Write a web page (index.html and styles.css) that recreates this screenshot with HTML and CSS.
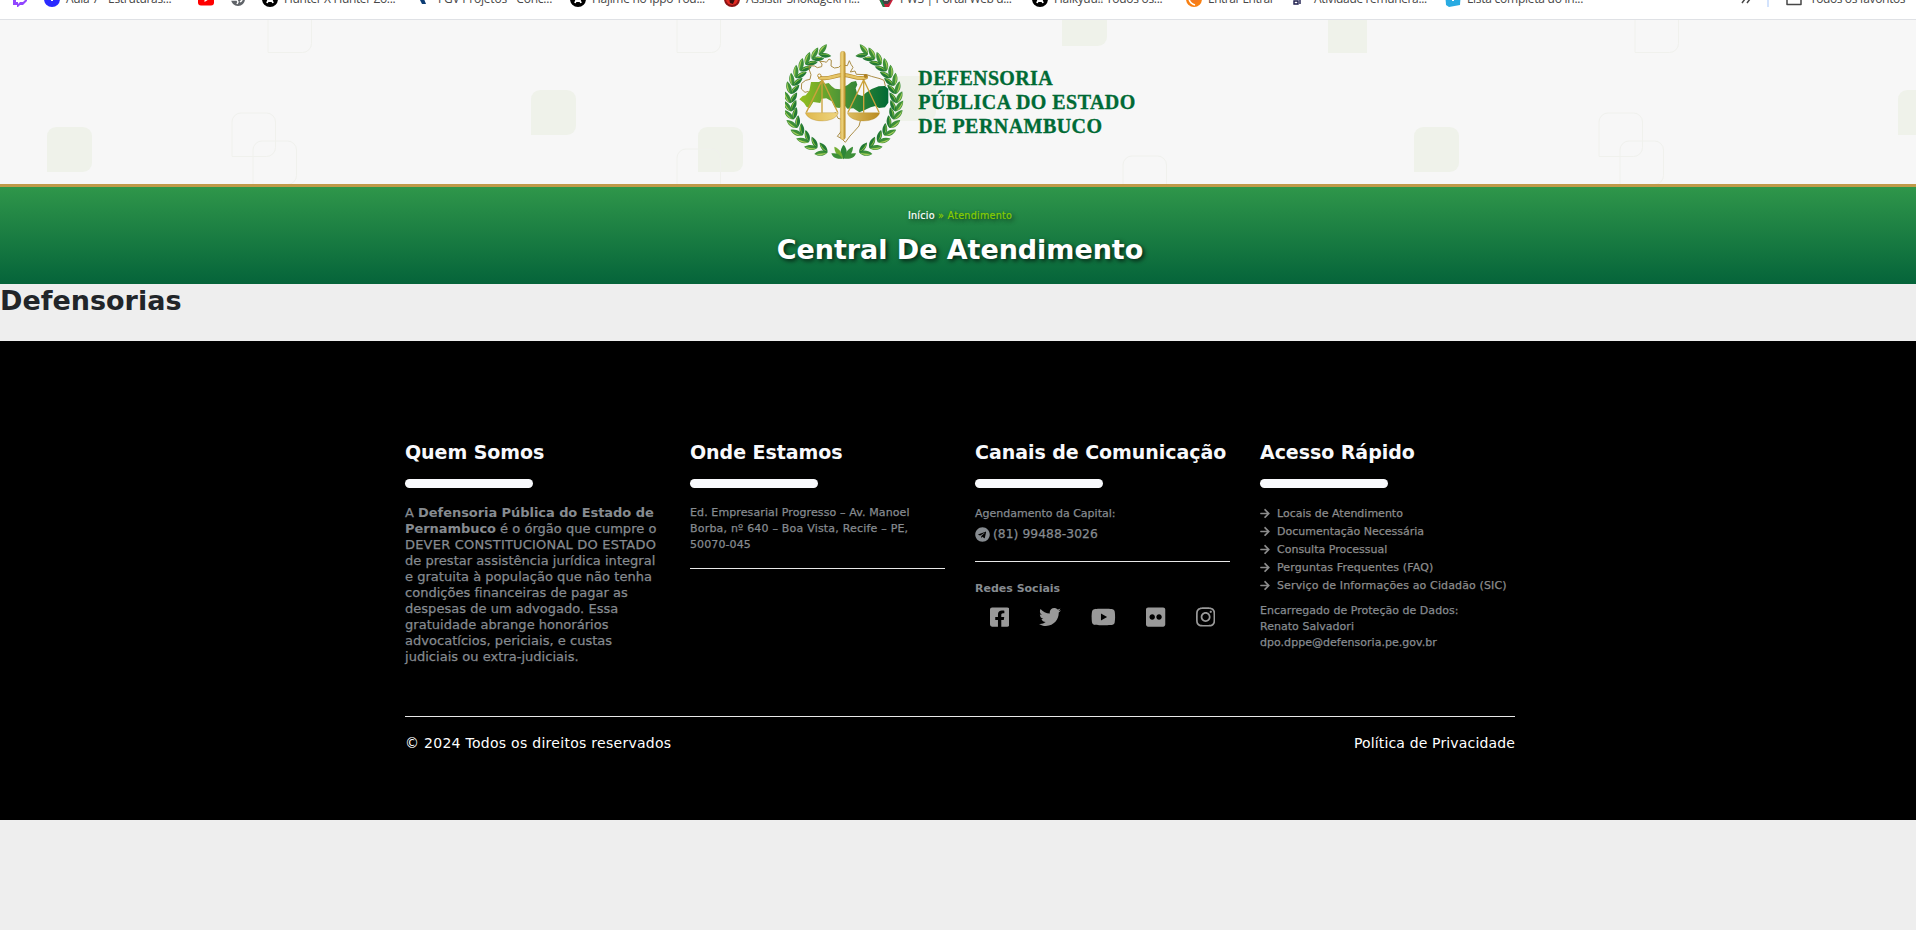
FILE: index.html
```
<!DOCTYPE html>
<html lang="pt-BR">
<head>
<meta charset="utf-8">
<title>Central De Atendimento</title>
<link rel="stylesheet" href="styles.css">
</head>
<body>
<div class="page">
  <nav class="bookmarks">
    <ul class="bookmark-list">
      <li class="bm bm-icon"><svg viewBox="0 0 16 16"><path fill="#9146ff" d="M2 0h13v10l-4 4H8l-3 3v-3H1V3z"/><path fill="#fff" d="M4 2h9v7l-2 2H8l-2 2v-2H4z"/></svg></li>
      <li class="bm bm-wide"><svg viewBox="0 0 16 16"><circle cx="8" cy="8" r="8" fill="#2a2aff"/><path fill="#fff" d="M7 4h2v6H7z"/></svg><span>Aula 7 - Estruturas...</span></li>
      <li class="bm bm-tube"><svg viewBox="0 0 16 16"><rect y="2.500" width="16" height="12" rx="3" fill="#f00"/><path fill="#fff" d="M6.500 6v5l4-2.500z"/></svg></li>
      <li class="bm bm-tube"><svg viewBox="0 0 16 16"><circle cx="8" cy="8" r="7" fill="#5f6368"/><path d="M1 9h6l1 2-1 2M10 4c3 2 3 5 0 7" stroke="#fff" stroke-width="1.500" fill="none"/></svg></li>
      <li class="bm bm-wide"><svg viewBox="0 0 16 16"><circle cx="8" cy="8" r="8" fill="#000"/><path d="M5 12l3-7 3 7M6 10h4" stroke="#fff" stroke-width="1.800" fill="none"/></svg><span class="t2">Hunter X Hunter Zo...</span></li>
      <li class="bm bm-wide"><svg viewBox="0 0 16 16"><path fill="#0b3c74" d="M3 7l5 1 2 5H6z"/></svg><span class="t3">FGV Projetos - Conc...</span></li>
      <li class="bm bm-wide"><svg viewBox="0 0 16 16"><circle cx="8" cy="8" r="8" fill="#000"/><path d="M5 12l3-7 3 7M6 10h4" stroke="#fff" stroke-width="1.800" fill="none"/></svg><span>Hajime no Ippo Tod...</span></li>
      <li class="bm bm-wide"><svg viewBox="0 0 16 16"><circle cx="8" cy="8" r="8" fill="#8c1414"/><circle cx="8" cy="8" r="6" fill="#e22a22"/><path d="M5 7l3 2 3-1-2 5-3-1z" fill="#3a0c0c"/></svg><span>Assistir Shokugeki n...</span></li>
      <li class="bm bm-wide"><svg viewBox="0 0 16 16"><path fill="#c8203a" d="M0 6l4-5h8l4 6-5 9H5z"/><path fill="#19854a" d="M0 6l5 10h2L4 6z"/><path fill="#444" d="M4 4h8l1 5-3 4H6L4 9z"/><path d="M6 8l1 2 1-2 1 2 1-2" stroke="#ddd" fill="none"/></svg><span class="t2">PWS | Portal Web d...</span></li>
      <li class="bm bm-wide"><svg viewBox="0 0 16 16"><circle cx="8" cy="8" r="8" fill="#000"/><path d="M5 12l3-7 3 7M6 10h4" stroke="#fff" stroke-width="1.800" fill="none"/></svg><span>Haikyuu!! Todos os...</span></li>
      <li class="bm bm-moodle"><svg viewBox="0 0 16 16"><circle cx="8" cy="8" r="8" fill="#f98012"/><circle cx="9" cy="7" r="5" fill="#f47a20"/><path d="M3 7c0 4 3 6 6 7" stroke="#fff" fill="none" stroke-width="1.500"/></svg><span class="t4">Entrar Entrar</span></li>
      <li class="bm bm-task"><svg viewBox="0 0 16 16"><path d="M2 5h4v3H2zM2 10h4v3H2zM8 5h5v3H8zM8 8v5" stroke="#1b1b4b" stroke-width="1.400" fill="none"/></svg><span class="t2">Atividade remunera...</span></li>
      <li class="bm bm-last"><svg viewBox="0 0 16 16"><path fill="#29abe2" d="M0 0h16l-1 14-11 2-3-2z"/><path fill="#fff" d="M7 5h2v5H7z"/></svg><span class="t5">Lista completa do in...</span></li>
      <li class="bm bm-more"><svg viewBox="0 0 12 16"><path d="M1 4l3 4-3 4M6 4l3 4-3 4" stroke="#474747" stroke-width="1.500" fill="none"/></svg></li>
      <li class="bm-divider"></li>
      <li class="bm"><svg viewBox="0 0 16 16"><path d="M1 3h5l2 2h7v8.500H1z" stroke="#474747" stroke-width="1.500" stroke-linejoin="round" fill="none"/></svg><span class="t6">Todos os favoritos</span></li>
    </ul>
  </nav>

  <header class="site-header">
    <svg class="header-pattern" width="1920" height="164" viewBox="0 20 1920 164">
      <defs>
        <path id="tile" d="M0 45V9a9 9 0 0 1 9-9H36a9 9 0 0 1 9 9V36a9 9 0 0 1-9 9z"/>
        <path id="line" d="M0 43.500V9a9 9 0 0 1 9-9H34.500a9 9 0 0 1 9 9V34.500a9 9 0 0 1-9 9z"/>
      </defs>
      <g fill="#eff2ea">
        <use href="#tile" x="47" y="127"/><use href="#tile" x="531" y="90"/><use href="#tile" x="698" y="127"/>
        <use href="#tile" x="891" y="76"/><use href="#tile" x="1062" y="1"/><path d="M1328 20h39v33h-39z"/>
        <use href="#tile" x="1414" y="127"/><use href="#tile" x="1898" y="90"/>
      </g>
      <g fill="none" stroke="#f0f1ed">
        <use href="#line" x="268" y="9"/><use href="#line" x="232" y="113"/><use href="#line" x="253" y="141"/>
        <use href="#line" x="677" y="9"/><use href="#line" x="677" y="149"/><use href="#line" x="1123" y="156"/>
        <use href="#line" x="1635" y="9"/><use href="#line" x="1599" y="113"/><use href="#line" x="1620" y="141"/>
      </g>
    </svg>
    <a class="logo" href="#">
      <svg width="350" height="120" viewBox="45 30 1050 360" role="img">
        <defs>
          <linearGradient id="gold" x1="0" x2="1"><stop offset="0" stop-color="#dfb84d"/><stop offset=".4" stop-color="#edd27c"/><stop offset="1" stop-color="#b88a20"/></linearGradient>
          <linearGradient id="land" x1="0" x2="1"><stop offset="0" stop-color="#95bf1f"/><stop offset=".45" stop-color="#4f9636"/><stop offset="1" stop-color="#006a35"/></linearGradient>
          <g id="leaf">
            <path fill="#3c8f38" d="M233 56C222 60 206 54 198 37C214 34 228 41 233 56z"/>
            <path fill="#a5cc5a" d="M231 53C222 48 212 42 201 38C212 37 224 42 231 53z"/>
            <path fill="#237a35" d="M233 56C220 53 206 60 200 75C216 77 229 69 233 56z"/>
            <path fill="#8fc040" d="M231 59C222 59 211 65 203 73C206 64 218 56 231 59z"/>
          </g>
          <g id="branch">
            <use href="#leaf" transform="rotate(23 220 215)"/><use href="#leaf" transform="rotate(32 220 215)"/><use href="#leaf" transform="rotate(41 220 215)"/>
            <use href="#leaf" transform="rotate(50 220 215)"/><use href="#leaf" transform="rotate(59 220 215)"/><use href="#leaf" transform="rotate(68 220 215)"/>
            <use href="#leaf" transform="rotate(77 220 215)"/><use href="#leaf" transform="rotate(87 220 215)"/><use href="#leaf" transform="rotate(96 220 215)"/>
            <use href="#leaf" transform="rotate(105 220 215)"/><use href="#leaf" transform="rotate(115 220 215)"/><use href="#leaf" transform="rotate(125 220 215)"/>
            <use href="#leaf" transform="rotate(135 220 215)"/><use href="#leaf" transform="rotate(146 220 215)"/><use href="#leaf" transform="rotate(158 220 215)"/>
          </g>
        </defs>
        <use href="#branch"/>
        <use href="#branch" transform="matrix(-1 0 0 1 440 0)"/>
        <path fill="#2c8537" d="M221 388C208 376 209 358 221 344C233 358 234 376 221 388z"/>
        <path fill="#73ad32" d="M219 386C203 382 193 366 193 350C209 356 218 370 219 386z"/>
        <path fill="#3c8f38" d="M223 386C239 382 249 366 249 350C233 356 224 370 223 386zM217 386C202 388 188 384 184 370C201 368 212 374 217 386zM225 386C240 388 254 384 258 370C241 368 230 374 225 386z"/>
        <path fill="none" stroke="#a4853a" stroke-width="2.800" stroke-linejoin="round" d="M116 184L105 187L94 177L95 160L107 151L120 148L123 134L118 120L117 107L134 108L142 113L155 110L156 102L149 94L163 95L169 97L177 87L184 91L183 108L193 114L206 112L214 105L232 107L238 92L243 103L249 112L241 126L255 123L259 133L290 134L304 139L330 146L342 151L346 168L330 180M292 267L272 269L267 288L252 305L240 318L226 337L214 325L202 319L216 301L215 268L204 265L195 246"/>
        <path fill="url(#land)" d="M123 156L147 156L155 151L166 161L176 159L185 169L195 176L210 178L222 170L233 165L244 156L258 153L262 164L257 175L262 193L277 198L288 188L305 177L326 169L345 168L355 177L355 218L345 232L327 234L316 228L302 232L286 239L268 247L250 235L232 236L223 225L208 234L194 232L185 214L169 205L155 206L151 219L130 216L119 234L110 231L102 219L88 208L98 198L107 196L118 182z"/>
        <path fill="none" stroke="#cba23b" stroke-width="4" d="M157 149L109 247M157 149L203 247M156 149V248M281 149L234 247M281 149L327 247M281 149V248"/>
        <path fill="url(#gold)" stroke="#ae8526" d="M106 248H205C198 280 116 282 106 248zM232 248H329C321 280 241 282 232 248z"/>
        <path fill="none" stroke="#b58b2d" stroke-width="12" stroke-linecap="round" d="M150 143C177 151 190 135 219 135C249 135 261 151 288 142"/>
        <path fill="none" stroke="#e6c567" stroke-width="8" stroke-linecap="round" d="M150 143C177 151 190 135 219 135C249 135 261 151 288 142"/>
        <circle cx="148" cy="137" r="5" fill="#fff" stroke="#b58b2d" stroke-width="3"/>
        <circle cx="287" cy="138" r="6" fill="#b08020"/>
        <rect x="211" y="64" width="15" height="265" rx="7" fill="url(#gold)" stroke="#b08a2d"/>
        <g class="logo-text">
          <text x="445" y="165" textLength="403">DEFENSORIA</text>
          <text x="445" y="237" textLength="651">PÚBLICA DO ESTADO</text>
          <text x="445" y="309" textLength="551">DE PERNAMBUCO</text>
        </g>
      </svg>
    </a>
  </header>

  <section class="banner">
    <p class="crumbs"><a href="#">Início</a> » Atendimento</p>
    <h1>Central De Atendimento</h1>
  </section>

  <main class="content"><h2>Defensorias</h2></main>

  <footer class="site-footer">
    <div class="footer-inner">
      <div class="columns">
        <section class="col">
          <h3>Quem Somos</h3>
          <p class="about">A <b>Defensoria Pública do Estado de<br>Pernambuco</b> é o órgão que cumpre o<br><span class="duty">DEVER CONSTITUCIONAL DO ESTADO</span><br>de prestar assistência jurídica integral<br>e gratuita à população que não tenha<br>condições financeiras de pagar as<br>despesas de um advogado. Essa<br>gratuidade abrange honorários<br>advocatícios, periciais, e custas<br>judiciais ou extra-judiciais.</p>
        </section>
        <section class="col">
          <h3>Onde Estamos</h3>
          <p class="address">Ed. Empresarial Progresso – Av. Manoel<br><span class="street">Borba, nº 640 – Boa Vista, Recife – PE,</span><br>50070-045</p>
          <div class="rule"></div>
        </section>
        <section class="col">
          <h3>Canais de Comunicação</h3>
          <p class="schedule">Agendamento da Capital:</p>
          <p class="phone"><svg viewBox="0 0 496 512"><path d="M248 8C111 8 0 119 0 256s111 248 248 248 248-111 248-248S385 8 248 8zm121.800 169.900l-40.700 191.800c-3 13.600-11.100 16.900-22.400 10.500l-62-45.700-29.900 28.800c-3.300 3.300-6.100 6.100-12.500 6.100l4.400-63.100 114.900-103.800c5-4.400-1.100-6.900-7.700-2.500l-142 89.400-61.200-19.100c-13.300-4.200-13.600-13.300 2.800-19.700l239.100-92.200c11.100-4 20.800 2.700 17.200 19.500z"/></svg>(81) 99488-3026</p>
          <div class="rule"></div>
          <p class="social-title">Redes Sociais</p>
          <div class="social">
            <svg class="w448" viewBox="0 0 448 512"><path d="M400 32H48A48 48 0 0 0 0 80v352a48 48 0 0 0 48 48h137.250V327.690h-63V256h63v-54.640c0-62.150 37-96.480 93.670-96.480 27.140 0 55.520 4.840 55.520 4.840v61h-31.270c-30.810 0-40.420 19.120-40.420 38.730V256h68.780l-11 71.690h-57.780V480H400a48 48 0 0 0 48-48V80a48 48 0 0 0-48-48z"/></svg>
            <svg class="w512" viewBox="0 0 512 512"><path d="M459.370 151.716c.325 4.548.325 9.097.325 13.645 0 138.720-105.583 298.558-298.558 298.558-59.452 0-114.680-17.219-161.137-47.106 8.447.974 16.568 1.299 25.340 1.299 49.055 0 94.213-16.568 130.274-44.832-46.132-.975-84.792-31.188-98.112-72.772 6.498.974 12.995 1.624 19.818 1.624 9.421 0 18.843-1.300 27.614-3.573-48.081-9.747-84.143-51.980-84.143-102.985v-1.299c13.969 7.797 30.214 12.670 47.431 13.319-28.264-18.843-46.781-51.005-46.781-87.391 0-19.492 5.197-37.360 14.294-52.954 51.655 63.675 129.300 105.258 216.365 109.807-1.624-7.797-2.599-15.918-2.599-24.040 0-57.828 46.782-104.934 104.934-104.934 30.213 0 57.502 12.670 76.670 33.137 23.715-4.548 46.456-13.320 66.599-25.340-7.798 24.366-24.366 44.833-46.132 57.827 21.117-2.273 41.584-8.122 60.426-16.243-14.292 20.791-32.161 39.308-52.628 54.253z"/></svg>
            <svg class="w576" viewBox="0 0 576 512"><path d="M549.655 124.083c-6.281-23.650-24.787-42.276-48.284-48.597C458.781 64 288 64 288 64S117.220 64 74.629 75.486c-23.497 6.322-42.003 24.947-48.284 48.597-11.412 42.867-11.412 132.305-11.412 132.305s0 89.438 11.412 132.305c6.281 23.650 24.787 41.500 48.284 47.821C117.220 448 288 448 288 448s170.780 0 213.371-11.486c23.497-6.321 42.003-24.171 48.284-47.821 11.412-42.867 11.412-132.305 11.412-132.305s0-89.438-11.412-132.305zm-317.510 213.508V175.185l142.739 81.205-142.739 81.201z"/></svg>
            <svg class="w448" viewBox="0 0 448 512"><path d="M400 32H48C21.500 32 0 53.500 0 80v352c0 26.500 21.500 48 48 48h352c26.500 0 48-21.500 48-48V80c0-26.500-21.500-48-48-48zM144.500 319c-35.100 0-63.500-28.400-63.500-63.500s28.400-63.500 63.500-63.500 63.500 28.400 63.500 63.500-28.400 63.500-63.500 63.500zm159 0c-35.100 0-63.500-28.400-63.500-63.500s28.400-63.500 63.500-63.500 63.500 28.400 63.500 63.500-28.400 63.500-63.500 63.500z"/></svg>
            <svg class="w448" viewBox="0 0 448 512"><path d="M224.100 141c-63.600 0-114.900 51.300-114.900 114.900s51.300 114.900 114.900 114.900S339 319.500 339 255.900 287.700 141 224.100 141zm0 189.600c-41.100 0-74.700-33.500-74.700-74.700s33.500-74.700 74.700-74.700 74.700 33.500 74.700 74.700-33.600 74.700-74.700 74.700zm146.400-194.300c0 14.900-12 26.800-26.800 26.800-14.900 0-26.800-12-26.800-26.800s12-26.800 26.800-26.800 26.800 12 26.800 26.800zm76.100 27.200c-1.700-35.900-9.900-67.700-36.200-93.900-26.200-26.200-58-34.400-93.900-36.200-37-2.100-147.900-2.100-184.900 0-35.800 1.700-67.600 9.900-93.900 36.100s-34.400 58-36.200 93.900c-2.100 37-2.100 147.900 0 184.900 1.700 35.900 9.900 67.700 36.200 93.900s58 34.400 93.900 36.200c37 2.100 147.900 2.100 184.900 0 35.900-1.700 67.700-9.900 93.900-36.200 26.200-26.200 34.400-58 36.200-93.900 2.100-37 2.100-147.800 0-184.800zM398.800 388c-7.800 19.600-22.900 34.700-42.600 42.600-29.500 11.700-99.500 9-132.100 9s-102.700 2.600-132.100-9c-19.600-7.800-34.700-22.900-42.600-42.600-11.700-29.500-9-99.500-9-132.100s-2.600-102.700 9-132.100c7.800-19.600 22.900-34.700 42.600-42.600 29.500-11.700 99.500-9 132.100-9s102.700-2.600 132.100 9c19.600 7.800 34.700 22.900 42.600 42.600 11.700 29.500 9 99.500 9 132.100s2.700 102.700-9 132.100z"/></svg>
          </div>
        </section>
        <section class="col">
          <svg class="sprite"><symbol id="arrow" viewBox="0 0 448 512"><path d="M190.500 66.900l22.200-22.200c9.400-9.400 24.600-9.400 33.900 0L441 239c9.400 9.400 9.400 24.600 0 33.900L246.600 467.300c-9.400 9.400-24.600 9.400-33.900 0l-22.200-22.200c-9.500-9.500-9.300-25 .4-34.300L311.400 296H24c-13.300 0-24-10.700-24-24v-32c0-13.300 10.700-24 24-24h287.400L190.900 101.200c-9.800-9.300-10-24.800-.4-34.300z"/></symbol></svg>
          <h3>Acesso Rápido</h3>
          <ul class="links">
            <li><svg><use href="#arrow"/></svg>Locais de Atendimento</li>
            <li><svg><use href="#arrow"/></svg>Documentação Necessária</li>
            <li><svg><use href="#arrow"/></svg>Consulta Processual</li>
            <li class="long"><svg><use href="#arrow"/></svg>Perguntas Frequentes (FAQ)</li>
            <li class="long"><svg><use href="#arrow"/></svg>Serviço de Informações ao Cidadão (SIC)</li>
          </ul>
          <p class="officer">Encarregado de Proteção de Dados:<br>Renato Salvadori<br>dpo.dppe@defensoria.pe.gov.br</p>
        </section>
      </div>
      <div class="legal"><span>© 2024 Todos os direitos reservados</span><a href="#">Política de Privacidade</a></div>
    </div>
  </footer>
</div>
</body>
</html>
```
FILE: styles.css
```
* { box-sizing: border-box; }
html, body { margin: 0; overflow: hidden; }
body { height: 930px; background: #eee; font-family: Verdana, "DejaVu Sans", sans-serif; color: #212529; }
h1, h2, h3, p, ul { margin: 0; padding: 0; }
ul { list-style: none; }
a { color: inherit; text-decoration: none; }
svg { display: block; flex: none; fill: currentColor; }
.page { width: 1920px; }

.bookmarks { height: 20px; overflow: hidden; background: #fff; border-bottom: 1px solid #dfe1e5; }
.bookmark-list { display: flex; align-items: center; height: 20px; margin-top: -11px; padding-left: 12px; }
.bm { display: flex; align-items: center; gap: 6px; flex: none; font: 12px/16px "Open Sans", sans-serif; letter-spacing: -.3px; color: #474747; white-space: nowrap; }
.bm svg { width: 16px; height: 16px; }
.bm-icon { width: 32px; }
.bm-wide { width: 154px; }
.bm-tube { width: 32px; }
.bm-moodle { width: 106px; }
.bm-task { width: 153px; }
.bm-last { width: 294px; }
.bm-more { width: 28px; }
.bm-divider { width: 2px; height: 16px; margin-right: 17px; background: #d3e3fd; }
.t2 { letter-spacing: -.36px; }
.t3 { letter-spacing: -.22px; }
.t4 { letter-spacing: -.5px; }
.t5 { letter-spacing: -.25px; }
.t6 { letter-spacing: -.4px; margin-left: 2px; }

.site-header { position: relative; display: flex; justify-content: center; height: 167px; padding-top: 20px; background: #f7f7f7; border-bottom: 3px solid #c09a48; }
.header-pattern { position: absolute; left: 0; top: 0; }
.logo { position: relative; height: 120px; }
.logo-text { font: bold 60px "Liberation Serif", serif; fill: #006a35; stroke: #006a35; stroke-width: 1px; }

.banner { height: 97px; padding-top: 22px; text-align: center; background: linear-gradient(#2f964a, #05643a); text-shadow: 2px 2px 4px rgba(0, 0, 0, .7); }
.crumbs { font-size: 9.6px; line-height: 14px; letter-spacing: .25px; -webkit-text-stroke: .2px; margin-bottom: 10px; color: #8c0; }
.crumbs a { color: #fff; }
.banner h1 { font-size: 27px; line-height: 33px; letter-spacing: -.06px; color: #fff; }

.content { height: 57px; }
.content h2 { font-size: 27px; line-height: 33px; letter-spacing: 0; }

.site-footer { height: 479px; padding: 99px 0 0 405px; background: #000; color: #868b90; }
.footer-inner { width: 1110px; }
.columns { display: grid; grid-template-columns: repeat(4, 255px); gap: 30px; height: 276px; }
.col { font-size: 11px; line-height: 16px; white-space: nowrap; }
.col p, .links { -webkit-text-stroke: .25px; }
.col h3 { font-size: 19px; line-height: 24px; letter-spacing: -.05px; color: #f8f9fc; margin-bottom: 17px; }
.col h3::after { content: ""; display: block; width: 128px; height: 9px; margin-top: 15px; border-radius: 5px; background: #f8f9fc; }
.rule { height: 1px; margin-top: 15px; background: #e8e8e8; }
.about { font-size: 13px; letter-spacing: .03px; }
.about b { letter-spacing: -.06px; -webkit-text-stroke: 0; }
.about .duty { letter-spacing: .2px; }
.address { letter-spacing: .11px; }
.address .street { letter-spacing: .2px; }
.schedule { padding-top: 1px; }
.phone { display: flex; align-items: center; gap: 3px; margin-top: 4px; font-size: 12.3px; letter-spacing: .05px; }
.phone svg { width: 15px; height: 15px; }
.phone + .rule { margin-top: 19px; }
.col .social-title { margin-top: 19px; font-weight: bold; -webkit-text-stroke: 0; }
.social { display: flex; justify-content: space-around; margin-top: 9px; }
.social svg { height: 22px; color: #999; }
.w448 { width: 19.25px; }
.w512 { width: 22px; }
.w576 { width: 24.75px; }
.sprite { display: none; }
.links { color: #8c8c8c; }
.links li { display: flex; align-items: center; gap: 7px; line-height: 18px; }
.links .long { letter-spacing: .13px; }
.links svg { width: 10px; height: 11px; margin-top: -2px; }
.officer { margin-top: 8px; letter-spacing: .03px; }
.legal { display: flex; justify-content: space-between; padding-top: 16px; border-top: 1px solid #e8e8e8; font-size: 14px; line-height: 21px; letter-spacing: .28px; color: #fff; }
.legal a { letter-spacing: .15px; }
```
